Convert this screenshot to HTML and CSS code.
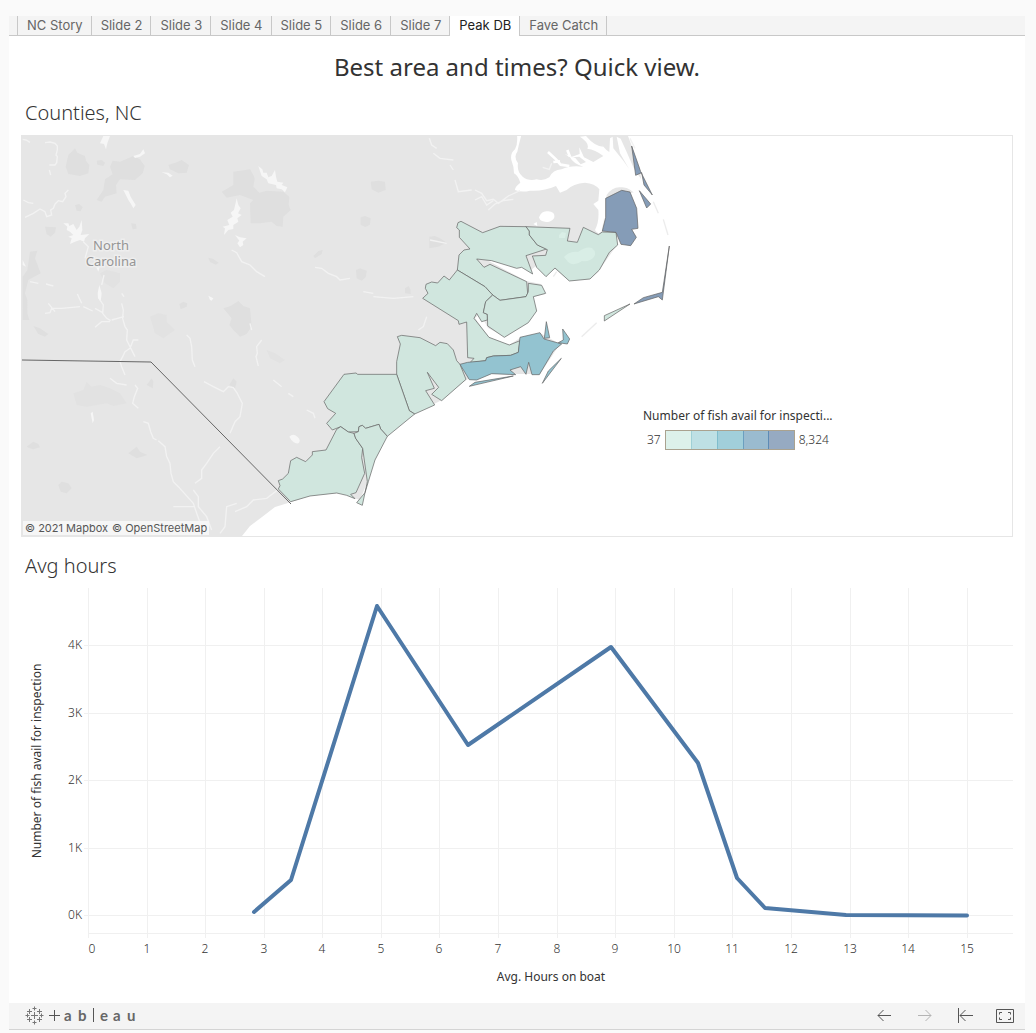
FILE: index.html
```html
<!DOCTYPE html>
<html lang="en">
<head>
<meta charset="utf-8">
<meta name="viewport" content="width=device-width, initial-scale=1">
<title>Peak DB</title>
<link rel="stylesheet" href="styles.css">
</head>
<body>
<div class="viz">
  <nav class="tabs" aria-label="Sheets">
    <button class="tab" type="button">NC Story</button>
    <button class="tab" type="button">Slide 2</button>
    <button class="tab" type="button">Slide 3</button>
    <button class="tab" type="button">Slide 4</button>
    <button class="tab" type="button">Slide 5</button>
    <button class="tab" type="button">Slide 6</button>
    <button class="tab" type="button">Slide 7</button>
    <button class="tab tab-active" type="button" aria-current="page">Peak DB</button>
    <button class="tab" type="button">Fave Catch</button>
  </nav>

  <main class="dashboard">
    <h1 class="title">Best area and times? Quick view.</h1>

    <section class="sheet">
      <h2 class="sheet-title">Counties, NC</h2>
      <div class="map">
        <svg class="map-canvas" viewBox="22 136 990 400" role="img" aria-label="Map of coastal North Carolina counties">
          <path class="land" d="M22 136H628L640 168 642 190 604 200 603 232 617 245 612 252 598 272 590 279 569 281 555 269 545 276 536 266 531 270 521 267 487 260 526 281 541 284 545 294 533 297 536 311 528 322 505 337 488 328 480 314 475 318 489 337 509 345 520 338 540 333 560 344 540 374 480 374 466 380 442 400 414 414 387 436 374 462 366 485 360 500 340 493 310 496 288 503 275 507 262 517 250 526 242 536H22Z"/>
          <!-- woodland and urban shading -->
          <g class="shade" transform="translate(20 130) scale(.33333)">
            <path d="M165 55L172 68 195 78 198 92 208 105 205 130 180 138 145 132 137 110 145 75ZM278 92L300 95 340 78 360 88 374 108 368 130 345 150 300 148 288 165 290 190 255 200 245 215 230 210 250 180 255 148 278 133 270 110ZM445 105L470 97 485 90 507 105 500 128 475 130 450 118ZM640 125L690 118 700 135 704 145 700 170 718 188 740 182 790 185 808 200 806 225 812 240 790 260 788 290 770 288 755 275 720 280 692 280 690 220 700 210 660 195 620 203 605 185 640 165ZM75 290L108 292 105 308 92 320 80 312ZM30 365L52 362 45 385 62 430 25 450 15 490 22 510 22 550 28 570 8 570 8 440 22 420ZM610 535L632 528 655 513 670 528 690 535 695 590 680 612 660 620 640 600 628 585 635 565ZM880 378L895 363 908 360 905 372 885 385ZM565 383L580 387 596 398 588 404 570 396ZM478 522L490 515 502 520 500 530 482 538ZM40 588L60 595 85 612 75 620 55 612ZM230 92L245 90 255 98 250 108 232 104ZM165 225L178 222 188 232 182 244 170 242ZM333 280L348 282 350 296 338 298Z"/>
            <path d="M1052 155L1075 152 1095 155 1097 180 1075 188 1055 178ZM1022 262L1035 258 1052 265 1050 284 1036 291 1022 284ZM1228 320L1245 318 1260 325 1280 338 1255 350 1228 355ZM1008 420L1020 415 1040 422 1038 440 1025 452 1010 445ZM1155 475L1166 468 1172 480 1172 492 1155 490Z"/>
            <path class="faint" d="M160 790L190 780 200 755 215 770 240 765 270 775 300 790 320 820 280 828 260 820 200 830 170 825ZM390 560L415 550 440 555 440 575 465 600 430 625 405 610ZM240 430L260 420 300 430 300 455 280 475 255 460ZM740 660L765 670 795 690 780 700 750 685Z"/>
            <path d="M325 970L350 950 360 965 382 975 365 980 350 985ZM20 950L40 935 55 942 60 952 40 958 30 955ZM115 1065L125 1055 145 1060 155 1075 140 1090 122 1085ZM380 765L395 745 400 755 398 775ZM628 765L640 745 650 755 645 775Z"/>
          </g>
          <!-- lakes and rivers -->
          <g class="lake" transform="translate(20 130) scale(.33333)">
            <path d="M250 18L270 18 262 40 258 58 252 42 240 40ZM715 108L727 118 730 128 740 128 745 142 755 138 765 120 768 140 772 155 790 158 785 165 802 172 795 187 785 178 770 175 768 165 745 160 740 148 725 138ZM650 205L655 225 662 235 654 250 665 255 652 265 655 275 640 285 640 297 625 300 612 315 615 295 608 290 628 285 622 270 638 260 632 248 642 240ZM645 315L660 322 680 325 668 335 670 345 660 352 652 340 658 332ZM130 280L145 280 148 288 160 282 170 300 178 290 185 270 187 300 182 315 208 312 195 325 192 335 180 330 165 335 150 342 155 325 145 320 160 315 150 305 140 300 142 290ZM310 180L325 182 332 200 347 225 340 235 333 222 325 210ZM230 380L242 400 235 425 228 410ZM8 390L18 410 8 405ZM340 78L360 72 370 58 375 70 360 80 345 84ZM565 497L580 505 575 512 570 510ZM425 127L445 128 458 137 450 142 440 133ZM233 490L238 465 245 490 242 515 234 505ZM212 850L218 845 222 870 218 880ZM808 920Q820 908 832 920 Q845 930 835 940 Q820 942 808 920Z"/>
            <path class="river" d="M8 28L18 30 30 37M75 38L90 36 105 40 112 48V60L108 75 112 80 110 98 105 105 88 105M88 120L92 135M145 180L135 190 138 200 128 215 115 212 105 222 100 235 92 240 95 255 80 260 75 245 60 237 40 250 15 262M10 210L25 218 40 220M30 455L55 460M78 462L100 468M75 550L90 548 95 535 125 535 180 530M85 520L105 545M172 492L185 520M190 530L218 543M225 535L248 548M190 335L205 350 195 385M252 435L245 465M240 510L250 525 248 550 260 565 272 572M270 575L245 575 225 592M305 490L312 500M305 520L310 540 308 565 315 590 322 600 320 630 345 680M275 570L312 560M355 630L340 630 330 655 315 665 308 680 300 695 305 710 315 735M270 745L290 760 320 765M345 765L353 775 343 800 338 820 355 835M370 875L385 880 392 905 400 925 410 930M415 932L435 950 440 980 450 1000 453 1030 460 1055 475 1070 520 1120 530 1150 550 1205M635 360L650 368 665 395 690 405 710 425 735 440M885 412L905 415 925 430 950 440 960 450 990 445M500 615L510 625 515 650 517 690 525 710M725 630L710 650 712 670 708 680 715 708M552 755L580 770 610 785 625 770 640 773 652 790 667 820 660 860 645 875 630 910M600 950L580 970 560 1000 545 1020 545 1045 525 1060 M520 1080L535 1100 535 1130 560 1160 575 1200M760 750L785 770M805 790L820 800M860 840L880 850 885 865M460 1130H525M600 1210L615 1190 620 1130 650 1120M645 1145L680 1130 700 1110 740 1105 780 1075M690 580L695 600"/>
            <path class="river" d="M1228 25L1235 45 1250 55M1240 70L1260 85 1300 90M1290 105L1300 120M1305 150L1315 185 1355 180M1365 210L1385 200 1400 225 1420 212M1030 485L1060 490M1060 500L1120 505 1180 500M1220 560L1210 590 1195 600M1230 330L1280 340M1080 850L1070 870 1072 910"/>
          </g>
          <g class="water" transform="translate(340 130) scale(.33333)">
            <path d="M531 16H544Q536 45 532 65 Q520 80 534 100 Q530 125 548 140 Q565 154 590 148 Q610 154 628 142 Q638 120 665 118 Q690 105 730 110 Q700 102 690 82 L674 72 706 84 722 103 738 96 718 80 692 82 719 72 718 52 732 82 760 96 790 78 Q765 58 742 56 Q750 40 720 20 L738 18 Q765 50 790 50 L768 22 Q800 65 808 66 L810 25 818 20 820 55 850 92 867 116 840 70 830 20 842 26 860 66 880 112 905 150 938 200 Q935 230 905 210 Q870 170 845 172 Q818 168 800 195 L795 240 786 302 Q775 318 765 300 Q778 275 775 240 L760 222 775 212 778 178 Q765 160 735 158 Q700 160 680 180 L660 188 648 168 Q610 185 570 182 Q545 188 525 180 Q525 170 541 158 Q535 138 522 130 Q522 110 514 90 Q510 70 525 58 Q534 40 531 16ZM597 262Q605 240 625 244 Q648 246 642 265 Q630 280 615 275 Q600 275 597 262ZM580 282L590 276 592 288Z"/>
            <path class="creek" d="M624 66L648 88 662 104 688 108M640 96L660 94 M682 60L690 80"/>
            <path class="river" d="M405 180L425 190 440 212 460 208 475 220 505 198 540 182M445 240L465 222 490 212 520 208M608 112L628 118 635 100M870 25L885 55"/>
            <path class="shoal" d="M940 215L955 250M970 268L984 315M770 578L725 620M650 425L640 440"/>
          </g>
          <!-- counties, northern half -->
          <g class="county" transform="translate(340 130) scale(.33333)">
            <path d="M350 293L354 278 363 274 428 308 480 289 558 290 568 303 568 315 592 345 620 357 558 377 578 432 545 412 530 415 455 392 410 387 432 412 450 403 560 455 563 490 558 500 480 511 458 495 435 470 352 420 357 375 372 360 390 357 358 322 358 300Z"/>
            <path d="M558 290L690 295 682 333 712 337 730 292 775 314 787 306 828 307 833 345 808 367 778 420 750 447 688 453 645 414 618 440 590 412 577 378 617 376 622 359 592 345 568 315 568 303Z"/>
            <path d="M870 522L793 557V573Z"/>
            <path d="M352 420L328 450 312 438 293 459 275 456 258 463 256 475 264 490 248 505 355 572 357 583 380 576 383 683 402 685 390 698 437 692 440 683 460 678 512 676 535 667 540 632 508 645 447 622 402 565 410 550 425 575 442 570 442 553 430 548 437 515 458 495 435 470Z"/>
            <path d="M458 495L480 511 558 500 565 485 565 460 605 466 617 490 580 500 590 543 565 578 493 622 443 588 442 553 430 548 437 515Z"/>
            <path class="high" d="M797 205L845 181 870 186 890 235 894 295 875 298 889 322 872 347 843 343 828 307 787 303 797 262ZM875 48L902 125 937 195 912 165 905 128 887 136ZM898 182L932 222 920 234ZM988 348L967 510 955 500 882 522 910 503 967 487Z"/>
          </g>
          <path class="county-lake" d="M564 257Q570 251 578 252 Q586 246 592 248 Q597 252 594 257 Q590 262 582 261 Q574 267 568 262ZM559 235L562 232 566 233 565 238 559 238Z"/>
          <!-- counties, southern half -->
          <g class="county" transform="translate(340 310) scale(.33333)">
            <path d="M172 80L185 76 240 83 287 107 300 97 322 101 340 120 350 152 360 163 378 208 305 272 275 253 296 232 262 187 283 235 257 242 284 285 224 312 208 302 170 193 170 155 181 102Z"/>
            <path d="M170 193H53L48 189 12 193 -48 275 -37 296 -13 310 -40 340 -23 360 2 350 25 366 55 365 57 350 67 346 77 355 117 343 122 357 142 379 224 312 208 302Z"/>
            <path d="M-10 358L2 350 25 366 42 370 47 385 68 415 65 443 74 490 48 548 32 553 45 566 20 556 -10 549 -90 558 -148 575 -185 537 -180 527 -185 512 -172 507 -155 490 -148 452 -130 442 -103 455 -83 435 -83 425 -42 420Z"/>
            <path d="M42 370L55 365 57 350 67 346 77 355 117 343 122 357 142 379 105 450 85 515 75 548 67 586 50 578 75 548 82 515 68 415 47 385Z"/>
            <path class="mid" d="M360 163L383 157 437 152 440 143 460 138 512 136 535 127 540 82 600 68 612 87 665 102 640 123 598 194H576L566 157 558 193 542 170 510 180 527 194 455 191 410 210 388 209ZM619 35L629 83 613 85ZM668 57L689 87 682 102 655 98 670 90ZM520 198L388 229 405 217ZM664 145L607 220 625 183Z"/>
          </g>
          <path class="state-line" d="M22 360L151 362 291 504"/>
          <text class="place" x="111" y="250">North</text>
          <text class="place" x="111" y="266">Carolina</text>
        </svg>
        <p class="credits"><a href="#mapbox">© 2021 Mapbox</a><a href="#osm">© OpenStreetMap</a></p>
        <div class="legend">
          <p class="legend-title">Number of fish avail for inspecti...</p>
          <div class="legend-scale">
            <span>37</span>
            <span class="ramp"><i class="step step-1"></i><i class="step step-2"></i><i class="step step-3"></i><i class="step step-4"></i><i class="step step-5"></i></span>
            <span>8,324</span>
          </div>
        </div>
      </div>
    </section>

    <section class="sheet">
      <h2 class="sheet-title">Avg hours</h2>
      <svg class="chart" viewBox="21 588 992 404" role="img" aria-label="Line chart of fish available for inspection by average hours on boat">
        <path class="grid" d="M88.500 588V938M147.500 588V938M205.500 588V938M264.500 588V938M322.500 588V938M381.500 588V938M439.500 588V938M498.500 588V938M557.500 588V938M615.500 588V938M674.500 588V938M732.500 588V938M791.500 588V938M850.500 588V938M908.500 588V938M967.500 588V938M84 645.500H1013M84 713.500H1013M84 780.500H1013M84 848.500H1013M84 915.500H1013M88 933.500H1013"/>
        <path class="series" d="M254 912L291 880 377 606 468 745 611 647 698 763 737 878 765 908 846 915 967 915.500"/>
        <g class="tick tick-y">
          <text x="82" y="649">4K</text><text x="82" y="717">3K</text><text x="82" y="784">2K</text><text x="82" y="852">1K</text><text x="82" y="919">0K</text>
        </g>
        <g class="tick tick-x">
          <text x="92" y="953">0</text><text x="147" y="953">1</text><text x="205" y="953">2</text><text x="264" y="953">3</text><text x="322" y="953">4</text><text x="381" y="953">5</text><text x="439" y="953">6</text><text x="498" y="953">7</text><text x="557" y="953">8</text><text x="615" y="953">9</text><text x="674" y="953">10</text><text x="732" y="953">11</text><text x="791" y="953">12</text><text x="850" y="953">13</text><text x="908" y="953">14</text><text x="967" y="953">15</text>
        </g>
        <text class="axis-title" x="551" y="981">Avg. Hours on boat</text>
        <text class="axis-title" transform="translate(41 761) rotate(-90)">Number of fish avail for inspection</text>
      </svg>
    </section>
  </main>

  <footer class="toolbar">
    <a class="brand" href="#tableau" aria-label="Tableau">
      <svg width="112" height="20" viewBox="25 1006 112 20">
        <path class="mark" d="M34.500 1012v7M31 1015.500h7M29.500 1009v5M27 1011.500h5M39.500 1009v5M37 1011.500h5M29.500 1017v5M27 1019.500h5M39.500 1017v5M37 1019.500h5M34.500 1006.500v4M32.500 1008.500h4M34.500 1020.500v4M32.500 1022.500h4M25.500 1015.500h4M27.500 1013.500v4M39.500 1015.500h4M41.500 1013.500v4"/>
        <path class="stem" d="M54.500 1010v11M49 1015.500h11M93.500 1008v14"/>
        <text class="word" x="64 78 100 113 127" y="1021">abeau</text>
      </svg>
    </a>
    <div class="actions">
      <button class="action" type="button" aria-label="Undo"><svg width="20" height="20"><path d="M3 9.500H16M8.500 4L3 9.500 8.500 15"/></svg></button>
      <button class="action" type="button" aria-label="Redo" disabled><svg width="20" height="20"><path d="M3 9.500H16M10.500 4L16 9.500 10.500 15"/></svg></button>
      <button class="action" type="button" aria-label="Revert"><svg width="20" height="20"><path d="M3.500 2V17M5 9.500H18M10.500 4L5 9.500 10.500 15"/></svg></button>
      <button class="action" type="button" aria-label="Full screen"><svg width="20" height="20"><path d="M1.500 3.500H18.500V16.500H1.500ZM4.500 8.500V6.500H7M13 6.500H15.500V8.500M15.500 11.500V13.500H13M7 13.500H4.500V11.500"/></svg></button>
    </div>
  </footer>
</div>
</body>
</html>
```
FILE: styles.css
```css
* { box-sizing: border-box; }

body {
  margin: 0;
  padding: 16px 11px 3px 9px;
  background: #fafafa;
  color: #333;
  font-family: "Noto Sans", "Open Sans", sans-serif;
}

h1, h2, p { margin: 0; }

button { font: inherit; margin: 0; }

.viz { background: #fff; border-bottom: 1px solid #d4d4d4; }

/* sheet tabs */
.tabs {
  display: flex;
  height: 20px;
  padding-left: 8px;
  background: #f4f4f4;
  box-shadow: inset 0 -1px #c8c8c8;
}

.tab {
  padding: 0 8px 2px 9px;
  border: 0;
  border-left: 1px solid #c8c8c8;
  background: none;
  color: #666;
  font-family: Inter, sans-serif;
  font-size: 13px;
  line-height: 16px;
  white-space: nowrap;
}

.tab:last-child { border-right: 1px solid #c8c8c8; }

.tab-active { background: #fff; color: #222; }

/* dashboard */
.dashboard { padding: 11px 12px; }

.title {
  font-size: 24px;
  font-weight: 400;
  line-height: 40px;
  text-align: center;
}

.sheet-title {
  padding: 0 4px;
  font-size: 20px;
  font-weight: 300;
  line-height: 30px;
}

.sheet { padding-top: 11px; }

.sheet + .sheet { padding-top: 14px; }

.sheet-title + * { margin-top: 7px; }

/* map */
.map { position: relative; border: 1px solid #e6e6e6; }

.map-canvas, .chart { display: block; width: 100%; height: auto; }

.land { fill: #e6e6e6; }
.shade { fill: #dfdfdf; }
.shade .faint { fill: #e2e2e2; }
.lake { fill: #f6f6f6; }
.water { fill: #fff; }
.river { fill: none; stroke: #f2f2f2; stroke-width: 4px; }
.creek { fill: none; stroke: #fff; stroke-width: 8px; }
.shoal { fill: none; stroke: #ececec; stroke-width: 4px; }

.county {
  fill: #d0e6de;
  stroke: #646464;
  stroke-opacity: 0.7;
  stroke-width: 3px;
  stroke-linejoin: round;
}

.county .mid { fill: #93c3d0; }
.county .high { fill: #859cb7; }
.county-lake { fill: #d9eee6; }
.state-line { fill: none; stroke: #666; }

.place {
  fill: #959595;
  stroke: #eee;
  stroke-width: 3px;
  paint-order: stroke;
  font-size: 13px;
  text-anchor: middle;
}

.credits {
  position: absolute;
  bottom: 1px;
  left: 1px;
  display: flex;
  gap: 4px;
  padding: 0 2px;
  background: #f6f6f6;
  font-family: Inter, sans-serif;
  font-size: 11px;
  line-height: 14px;
}

.credits a { color: #555; text-decoration: none; }

.legend {
  position: absolute;
  top: 271px;
  left: 621px;
  font-size: 12px;
}

.legend-title { line-height: 18px; }

.legend-scale {
  display: flex;
  align-items: center;
  gap: 4px;
  padding: 5px 4px;
  color: #333;
  font-weight: 300;
  line-height: 20px;
}

.ramp { display: flex; width: 130px; height: 20px; border: 1px solid #aaa28f; }
.step { flex: 1; border-left: 1px solid; }
.step-1 { background: #ddf1ea; border-color: #ddf1ea; }
.step-2 { background: #bee0e4; border-color: #9fd0d6; }
.step-3 { background: #a1cfda; border-color: #7fbdcc; }
.step-4 { background: #9abbcf; border-color: #6b9fbf; }
.step-5 { background: #96aac2; border-color: #5d8bb5; }

/* line chart */
.grid { fill: none; stroke: #f0f0f0; }

.series {
  fill: none;
  stroke: #4e79a7;
  stroke-width: 4px;
  stroke-linecap: round;
  stroke-linejoin: round;
}

.tick { fill: #333; font-size: 12px; font-weight: 300; }
.tick-x { text-anchor: middle; }
.tick-y { text-anchor: end; }
.axis-title { fill: #333; font-size: 12px; text-anchor: middle; }

/* bottom toolbar */
.toolbar {
  display: flex;
  align-items: center;
  justify-content: space-between;
  height: 26px;
  padding: 0 10px 0 16px;
  background: #f4f4f4;
}

.brand { display: flex; }
.mark { fill: none; stroke: #777; }
.stem { fill: none; stroke: #555; }
.word { fill: #666; font-family: Lato, sans-serif; font-size: 15px; font-weight: 700; }

.actions { display: flex; gap: 20px; }

.action {
  display: flex;
  padding: 0;
  border: 0;
  background: none;
  color: #555;
}

.action:disabled { color: #b4b4b4; }
.action path { fill: none; stroke: currentColor; }
```
